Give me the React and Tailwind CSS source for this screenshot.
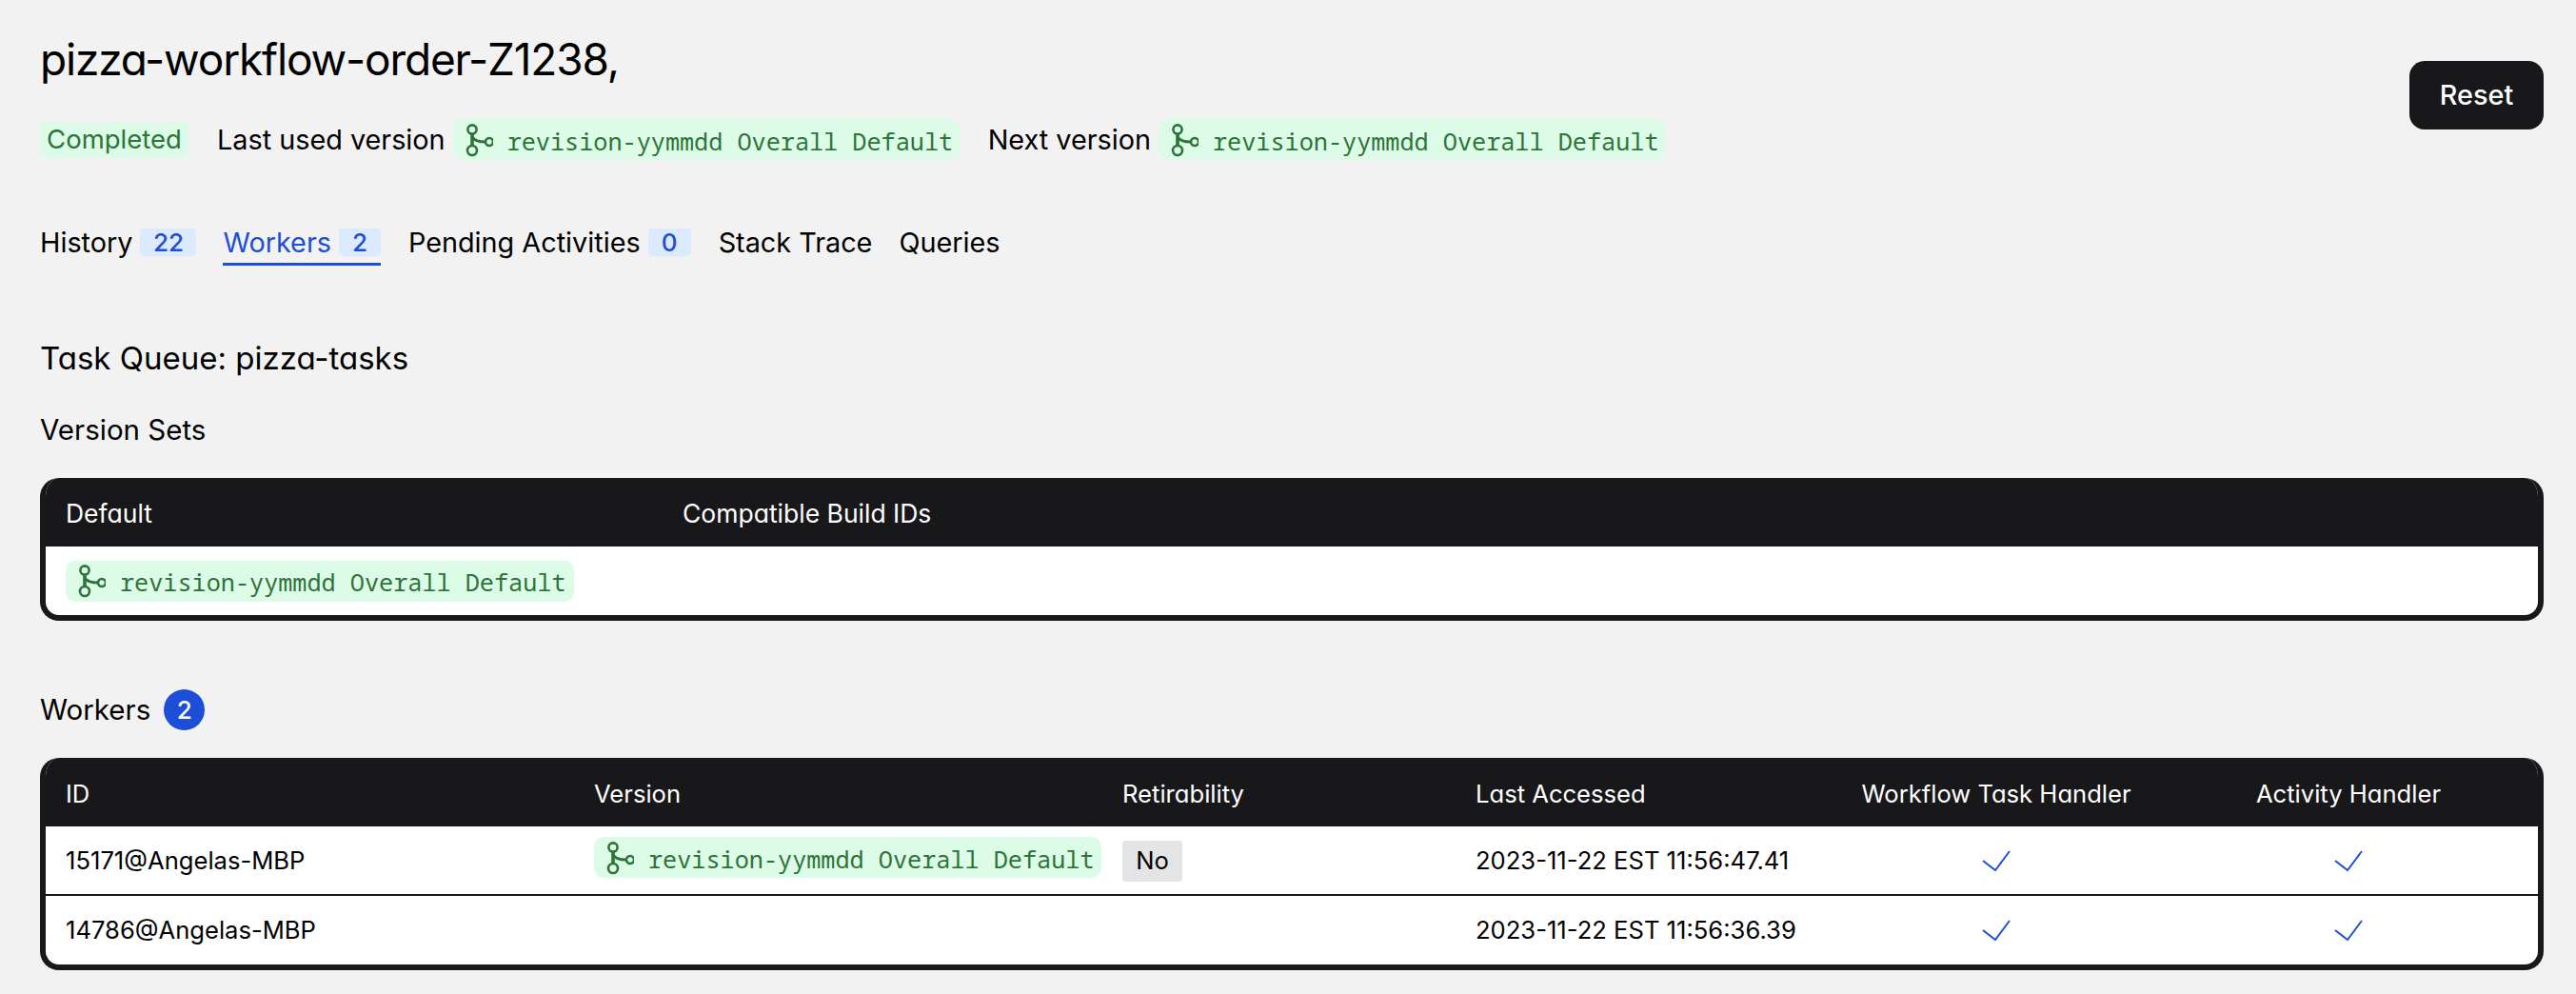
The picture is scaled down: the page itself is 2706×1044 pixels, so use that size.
import React from 'react';

const heading = "font-['Inter',sans-serif] [font-feature-settings:'cv11'] text-black";

function BuildIcon() {
    return (
        <svg width="30" height="36" viewBox="0 0 30 36" fill="none" stroke="currentColor" strokeWidth="2.6" className="shrink-0">
            <circle cx="8" cy="7" r="4.6" />
            <circle cx="8" cy="29" r="5" />
            <circle cx="26" cy="20" r="4" />
            <path d="M8 11v13" strokeWidth="3.6" />
            <path d="M8 15c2 3.5 6 5 14 5" strokeWidth="3.2" />
        </svg>
    );
}

function VersionChip({ className = '' }) {
    return (
        <span className={`inline-flex h-[43px] w-[532px] items-center gap-[15px] rounded-[10px] bg-[#dcfce7] pl-[12px] text-[#2e7339] ${className}`}>
            <BuildIcon />
            <span className="pt-[4px] font-['Noto_Sans_Mono','DejaVu_Sans_Mono',monospace] text-[25.2px] leading-none whitespace-nowrap">revision-yymmdd Overall Default</span>
        </span>
    );
}

function Count({ value, width }) {
    return (
        <span className={`ml-[8px] flex h-[29px] items-center justify-center rounded-[4px] bg-[#dbeafe] text-[26px] font-medium text-[#1d4ed8] ${width}`}>
            {value}
        </span>
    );
}

function Check() {
    return (
        <svg width="30" height="22" viewBox="0 0 30 22" fill="none" stroke="#1d4ed8" strokeWidth="2" className="mx-auto">
            <path d="M1 11l13 10L29 1" />
        </svg>
    );
}

const workerCols = "grid grid-cols-[555px_555px_371px_383px_370px_370px]";

export default function App() {
    return (
        <div className="min-h-[1044px] bg-[#f2f2f2] pt-[32px] pr-[34px] pl-[42px] font-['Inter',sans-serif] text-[28.8px] text-black">
            <div className="flex items-start justify-between">
                <div>
                    <h1 className={`${heading} h-[60px] text-[46px] leading-[60px] tracking-[-1.15px]`}>pizza-workflow-order-Z1238,</h1>
                    <div className="mt-[33px] flex h-[43px] items-center">
                        <span className="flex h-[36px] w-[156px] items-center justify-center rounded-[4px] bg-[#dcfce7] text-[27.5px] text-[#2e7339] [font-feature-settings:'cv11']">Completed</span>
                        <span className="ml-[30px]">Last used version</span>
                        <VersionChip className="ml-[8px]" />
                        <span className="ml-[30px]">Next version</span>
                        <VersionChip className="ml-[8px]" />
                    </div>
                </div>
                <button className="mt-[32px] h-[72px] w-[141px] rounded-[16px] bg-[#18181b] text-[28.8px] font-medium text-white">Reset</button>
            </div>

            <nav className="mt-[72px] flex h-[39px] items-start">
                <div className="flex h-[29px] items-center"><span>History</span><Count value="22" width="w-[59px]" /></div>
                <div className="ml-[28px] flex h-[39px] items-start border-b-[3px] border-[#1d4ed8] pb-[7px] text-[#1d4ed8]">
                    <div className="flex h-[29px] items-center"><span>Workers</span><Count value="2" width="w-[44px]" /></div>
                </div>
                <div className="ml-[29px] flex h-[29px] items-center"><span>Pending Activities</span><Count value="0" width="w-[45px]" /></div>
                <span className="ml-[29px] flex h-[29px] items-center">Stack Trace</span>
                <span className="ml-[28px] flex h-[29px] items-center">Queries</span>
            </nav>

            <h2 className={`${heading} mt-[77px] h-[40px] text-[33px] leading-[40px]`}>Task Queue: pizza-tasks</h2>
            <h3 className={`${heading} mt-[37px] h-[36px] text-[29.5px] leading-[36px]`}>Version Sets</h3>

            <section className="mt-[33px] overflow-hidden rounded-[20px] border-x-[6px] border-b-[6px] border-[#18181b] bg-white">
                <div className={`${heading} grid h-[72px] grid-cols-[648px_1fr] items-center bg-[#18181b] pt-[4px] pl-[21px] text-[26.5px]`}>
                    <span className="text-white">Default</span>
                    <span className="text-white">Compatible Build IDs</span>
                </div>
                <div className="flex h-[72px] items-center pl-[21px]">
                    <VersionChip className="w-[534px]" />
                </div>
            </section>

            <div className="mt-[72px] flex h-[43px] items-center">
                <span className={`${heading} text-[29.5px]`}>Workers</span>
                <span className="ml-[14px] flex h-[43px] w-[43px] items-center justify-center rounded-full bg-[#1d4ed8] text-[26px] font-medium text-white">2</span>
            </div>

            <section className="mt-[29px] overflow-hidden rounded-[20px] border-x-[6px] border-b-[6px] border-[#18181b] bg-white">
                <div className={`${workerCols} h-[72px] items-center bg-[#18181b] pt-[4px] text-[25.6px] text-white [font-feature-settings:'cv11']`}>
                    <span className="pl-[21px]">ID</span>
                    <span className="pl-[21px]">Version</span>
                    <span className="pl-[21px]">Retirability</span>
                    <span className="pl-[21px]">Last Accessed</span>
                    <span className="text-center">Workflow Task Handler</span>
                    <span className="text-center">Activity Handler</span>
                </div>
                <div className={`${workerCols} h-[73px] items-center border-b-2 border-[#18181b] pt-[1px] text-[25.6px]`}>
                    <span className="pl-[21px]">15171@Angelas-MBP</span>
                    <span className="pl-[21px]"><VersionChip className="w-[533px]" /></span>
                    <span className="pl-[21px]">
                        <span className="flex h-[43px] w-[63px] items-center justify-center rounded-[4px] bg-[#e4e4e7]">No</span>
                    </span>
                    <span className="pl-[21px]">2023-11-22 EST 11:56:47.41</span>
                    <Check />
                    <Check />
                </div>
                <div className={`${workerCols} h-[72px] items-center text-[25.6px]`}>
                    <span className="pl-[21px]">14786@Angelas-MBP</span>
                    <span />
                    <span />
                    <span className="pl-[21px]">2023-11-22 EST 11:56:36.39</span>
                    <Check />
                    <Check />
                </div>
            </section>
        </div>
    );
}
